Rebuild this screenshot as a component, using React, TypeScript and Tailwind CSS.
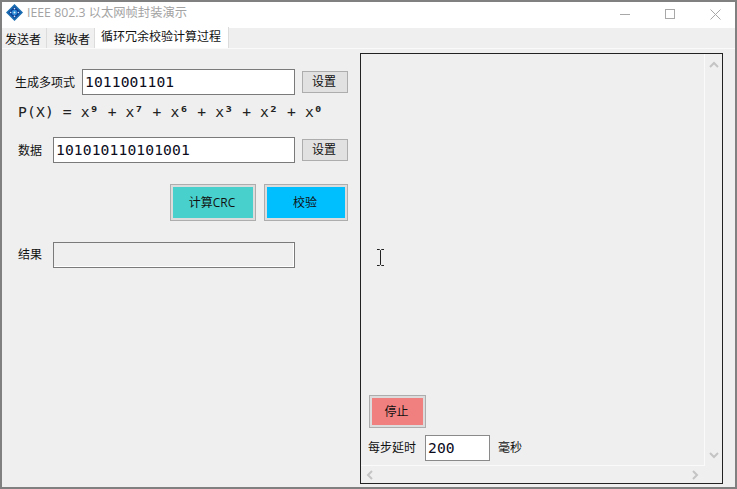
import React from 'react';

const cjk = "font-['Open_Sans','Noto_Sans_CJK_SC',sans-serif]";
const mono = "font-['DejaVu_Sans_Mono','Noto_Sans_CJK_SC',monospace]";
const field = `h-[26px] border bg-white pl-[2px] text-[14.67px] tracking-[0.1px] leading-[24px] text-[#0c0c1c] ${mono}`;

function AppIcon() {
  return (
    <svg width="17" height="17" viewBox="0 0 17 17" className="shrink-0">
      <path d="M8.5 0 L17 8.5 L8.5 17 L0 8.5 Z" fill="#1a6db0" />
      <path d="M8.5 2.5 L14.5 8.5 L8.5 14.5 L2.5 8.5 Z" fill="#0b3f96" />
      <circle cx="8.5" cy="8.5" r="2.8" fill="#2c8ad4" />
      <circle cx="8.5" cy="8.5" r="1" fill="#e4f2fb" />
      <circle cx="8.5" cy="4.6" r="0.8" fill="#cfe6f5" />
      <circle cx="8.5" cy="12.4" r="0.8" fill="#cfe6f5" />
      <circle cx="4.6" cy="8.5" r="0.8" fill="#cfe6f5" />
      <circle cx="12.4" cy="8.5" r="0.8" fill="#cfe6f5" />
    </svg>
  );
}

function SetButton() {
  return (
    <button className={`w-[46px] h-[22px] pr-[2px] border border-[#adadad] bg-[#e1e1e1] text-[12px] leading-none text-[#111] ${cjk}`}>
      设置
    </button>
  );
}

function ColorButton({ label, color, width, height }: { label: string; color: string; width: string; height: string }) {
  return (
    <div className={`${width} ${height} shrink-0 border border-[#adadad] bg-[#dcdcdc] p-[2px]`}>
      <div className={`w-full h-full pr-[2px] flex items-center justify-center text-[12px] text-[#111] ${color} ${cjk}`}>{label}</div>
    </div>
  );
}

function Chevron({ d }: { d: string }) {
  return (
    <svg width="10" height="8" viewBox="0 0 10 8" fill="none" stroke="#c4c4c4" strokeWidth="2">
      <path d={d} />
    </svg>
  );
}

export default function App() {
  return (
    <div className={`relative w-[737px] h-[489px] flex flex-col border-2 border-[#808080] bg-[#efefef] overflow-hidden ${cjk}`}>
      {/* title bar */}
      <div className="h-[26px] shrink-0 bg-white flex items-start pl-[4px] pt-[2px]">
        <AppIcon />
        <span className="ml-[4px] text-[12.3px] leading-[17px] text-[#a3a3a3] whitespace-nowrap">IEEE 802.3 以太网帧封装演示</span>
        <div className="ml-auto flex items-center h-[17px] pt-[3px] pr-[14px]">
          <div className="w-[10px] h-px bg-[#a8a8a8]" />
          <div className="ml-[35px] w-[10px] h-[10px] border border-[#a8a8a8]" />
          <svg width="11" height="11" viewBox="0 0 11 11" stroke="#a8a8a8" strokeWidth="1" className="ml-[35px]"><path d="M0.5 0.5 L10.5 10.5 M10.5 0.5 L0.5 10.5" /></svg>
        </div>
      </div>

      {/* tabs */}
      <div className="h-[21px] shrink-0 flex items-end border-b border-[#fafafa] text-[12px] text-[#111]">
        <div className="w-[45px] h-[20px] pl-[3px] pt-[2px] leading-[20px] border-r border-[#dcdcdc] bg-[#f0f0f0]">发送者</div>
        <div className="w-[48px] h-[20px] pl-[7px] pt-[2px] leading-[20px] border-r border-[#dcdcdc] bg-[#f0f0f0]">接收者</div>
        <div className="w-[134px] h-[21px] pl-[6px] leading-[20px] bg-white border-r border-[#dcdcdc]">循环冗余校验计算过程</div>
      </div>

      <div className="flex-1 flex min-h-0">
        {/* left pane */}
        <div className="w-[358px] shrink-0 pl-[13px] pt-[20px] text-[12px] text-[#111]">
          <div className="flex items-center h-[26px]">
            <span className="w-[67px] pt-[2px] whitespace-nowrap">生成多项式</span>
            <div className={`w-[213px] border-[#7a7a7a] ${field}`}>1011001101</div>
            <div className="ml-[7px]"><SetButton /></div>
          </div>
          <div className={`mt-[6px] ml-[3px] h-[22px] text-[14.67px] tracking-[0.14px] leading-[22px] text-[#222] whitespace-nowrap ${mono}`}>
            P(X) = x<b>⁹</b> + x<b>⁷</b> + x<b>⁶</b> + x<b>³</b> + x<b>²</b> + x<b>⁰</b>
          </div>
          <div className="flex items-center h-[26px] mt-[14px]">
            <span className="w-[38px] pl-[3px] pt-[1px] whitespace-nowrap">数据</span>
            <div className={`w-[242px] border-[#7a7a7a] ${field}`}>101010110101001</div>
            <div className="ml-[7px]"><SetButton /></div>
          </div>
          <div className="flex mt-[21px] ml-[155px] gap-[8px]">
            <ColorButton label="计算CRC" color="bg-[#48d1cc]" width="w-[86px]" height="h-[37px]" />
            <ColorButton label="校验" color="bg-[#00bfff]" width="w-[84px]" height="h-[37px]" />
          </div>
          <div className="flex items-center h-[26px] mt-[21px]">
            <span className="w-[38px] pl-[3px] whitespace-nowrap">结果</span>
            <div className="w-[242px] h-[26px] border border-[#7a7a7a] bg-[#efefef] shadow-[inset_-1px_-1px_0_#fff]" />
          </div>
        </div>

        {/* right panel */}
        <div className="w-[363px] h-[431px] mt-[4px] shrink-0 border border-[#222] flex flex-col text-[12px] text-[#111]">
          <div className="flex-1 flex min-h-0">
            <div className="flex-1 border-r border-[#fafafa] flex flex-col justify-end pl-[8px] pb-[4px]">
              <ColorButton label="停止" color="bg-[#f08080]" width="w-[57px]" height="h-[33px]" />
              <div className="flex items-center mt-[7px] h-[26px]">
                <span className="w-[57px] -ml-[1px] whitespace-nowrap">每步延时</span>
                <div className={`w-[65px] border-[#8a8a8a] ${field}`}>200</div>
                <span className="ml-[8px]">毫秒</span>
              </div>
            </div>
            <div className="w-[17px] shrink-0 flex flex-col items-center justify-between pt-[7px] pb-[6px]">
              <Chevron d="M1 6 L5 2 L9 6" />
              <Chevron d="M1 2 L5 6 L9 2" />
            </div>
          </div>
          <div className="h-[18px] shrink-0 mr-[17px] border-t border-[#fafafa] flex items-center justify-between pl-[5px] pr-[6px]">
            <svg width="8" height="10" viewBox="0 0 8 10" fill="none" stroke="#c4c4c4" strokeWidth="2"><path d="M6 1 L2 5 L6 9" /></svg>
            <svg width="8" height="10" viewBox="0 0 8 10" fill="none" stroke="#c4c4c4" strokeWidth="2"><path d="M2 1 L6 5 L2 9" /></svg>
          </div>
        </div>
      </div>

      {/* mouse cursor */}
      <svg width="9" height="17" viewBox="0 0 9 17" fill="none" stroke="#222" strokeWidth="1" className="absolute left-[374px] top-[247px]">
        <path d="M1 0.5 H3.5 L4.5 1.5 L5.5 0.5 H8 M4.5 1.5 V15.5 M1 16.5 H3.5 L4.5 15.5 L5.5 16.5 H8" />
      </svg>
    </div>
  );
}
